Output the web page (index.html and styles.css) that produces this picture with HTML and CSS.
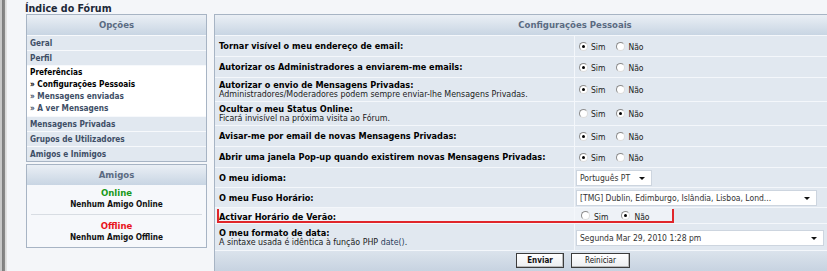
FILE: index.html
```html
<!DOCTYPE html>
<html lang="pt">
<head>
<meta charset="utf-8">
<title>Índice do Fórum</title>
<link rel="stylesheet" href="styles.css">
</head>
<body>
<div class="page">
  <div class="edge"></div>
  <div class="content">
    <h1 class="title">Índice do Fórum</h1>
    <div class="columns">
      <aside class="sidebar">
        <div class="box">
          <div class="box-head">Opções</div>
          <div class="menu-row">Geral</div>
          <div class="menu-row">Perfil</div>
          <div class="menu-block">
            <div class="menu-cur">Preferências</div>
            <div class="menu-sub active">» Configurações Pessoais</div>
            <div class="menu-sub">» Mensagens enviadas</div>
            <div class="menu-sub">» A ver Mensagens</div>
          </div>
          <div class="menu-row">Mensagens Privadas</div>
          <div class="menu-row">Grupos de Utilizadores</div>
          <div class="menu-row">Amigos e Inimigos</div>
        </div>
        <div class="box friends">
          <div class="box-head">Amigos</div>
          <div class="friends-body">
            <div class="friend-group">
              <div class="online">Online</div>
              <div class="friend-none">Nenhum Amigo Online</div>
            </div>
            <div class="friend-sep"></div>
            <div class="friend-group">
              <div class="offline">Offline</div>
              <div class="friend-none">Nenhum Amigo Offline</div>
            </div>
          </div>
        </div>
      </aside>

      <main class="panel">
        <div class="box-head panel-head">Configurações Pessoais</div>

        <div class="row r-radio">
          <div class="label"><b>Tornar visível o meu endereço de email:</b></div>
          <div class="value"><span class="radio on"></span><span class="rl">Sim</span><span class="radio"></span><span class="rl">Não</span></div>
        </div>
        <div class="row r-radio">
          <div class="label"><b>Autorizar os Administradores a enviarem-me emails:</b></div>
          <div class="value"><span class="radio on"></span><span class="rl">Sim</span><span class="radio"></span><span class="rl">Não</span></div>
        </div>
        <div class="row r-two">
          <div class="label"><b>Autorizar o envio de Mensagens Privadas:</b><span class="desc">Administradores/Moderadores podem sempre enviar-lhe Mensagens Privadas.</span></div>
          <div class="value"><span class="radio on"></span><span class="rl">Sim</span><span class="radio"></span><span class="rl">Não</span></div>
        </div>
        <div class="row r-two">
          <div class="label"><b>Ocultar o meu Status Online:</b><span class="desc">Ficará invisível na próxima visita ao Fórum.</span></div>
          <div class="value"><span class="radio"></span><span class="rl">Sim</span><span class="radio on"></span><span class="rl">Não</span></div>
        </div>
        <div class="row r-radio">
          <div class="label"><b>Avisar-me por email de novas Mensagens Privadas:</b></div>
          <div class="value"><span class="radio on"></span><span class="rl">Sim</span><span class="radio"></span><span class="rl">Não</span></div>
        </div>
        <div class="row r-radio">
          <div class="label"><b>Abrir uma janela Pop-up quando existirem novas Mensagens Privadas:</b></div>
          <div class="value"><span class="radio on"></span><span class="rl">Sim</span><span class="radio"></span><span class="rl">Não</span></div>
        </div>
        <div class="row r-select">
          <div class="label"><b>O meu idioma:</b></div>
          <div class="value"><span class="select sel-lang">Português PT<span class="arrow"></span></span></div>
        </div>
        <div class="row r-select">
          <div class="label"><b>O meu Fuso Horário:</b></div>
          <div class="value"><span class="select sel-tz">[TMG] Dublin, Edimburgo, Islândia, Lisboa, Lond...<span class="arrow"></span></span></div>
        </div>
        <div class="row r-dst">
          <div class="label"><b>Activar Horário de Verão:</b></div>
          <div class="value dst"><span class="radio"></span><span class="rl">Sim</span><span class="radio on"></span><span class="rl">Não</span></div>
          <div class="mark"></div>
        </div>
        <div class="row r-date">
          <div class="label"><b>O meu formato de data:</b><span class="desc">A sintaxe usada é idêntica à função PHP <span class="fn">date()</span>.</span></div>
          <div class="value"><span class="select sel-date">Segunda Mar 29, 2010 1:28 pm<span class="arrow"></span></span></div>
        </div>
        <div class="foot">
          <span class="btn btn-main">Enviar</span>
          <span class="btn">Reiniciar</span>
        </div>
      </main>
    </div>
  </div>
</div>
</body>
</html>
```
FILE: styles.css
```css
* { box-sizing: border-box; }
html, body { margin: 0; padding: 0; }
body {
  width: 827px;
  height: 271px;
  overflow: hidden;
  background: #f4f6f9;
  font-family: Tahoma, "DejaVu Sans Condensed", "DejaVu Sans", sans-serif;
  color: #000;
}
.page { display: flex; width: 827px; height: 271px; overflow: hidden; }
.edge {
  width: 7px;
  flex: none;
  background: linear-gradient(90deg, #c8c8c8 0, #c8c8c8 2px, #7d7d7d 2px, #8a8a8a 5px, #d6d6d6 5px, #e6e6e6 7px);
}
.content { padding-left: 18px; flex: none; }
.title {
  margin: 0;
  height: 14px;
  padding-top: 2px;
  font-size: 10.6px;
  line-height: 12px;
  font-weight: bold;
  color: #1c2838;
}
.columns { display: flex; gap: 7px; align-items: flex-start; }

/* sidebar */
.sidebar { width: 182px; flex: none; display: flex; flex-direction: column; gap: 2px; padding-left: 1px; }
.box { border: 1px solid #a7b4c4; background: #fff; }
.box-head {
  height: 20px;
  background: linear-gradient(#eaeff5, #c8d5e3);
  text-align: center;
  font-size: 9.5px;
  line-height: 20px;
  font-weight: bold;
  color: #5b6b82;
}
.menu-row {
  height: 15px;
  border-top: 1px solid #f7f9fc;
  background: #e1e8f0;
  padding-left: 3px;
  font-size: 8.2px;
  line-height: 14px;
  font-weight: bold;
  color: #3e4e66;
}
.menu-block {
  border-top: 1px solid #f7f9fc;
  background: #fff;
  height: 51px;
  padding: 1px 0 0 3px;
  font-size: 8.2px;
  font-weight: bold;
  line-height: 12px;
}
.menu-cur { color: #000; line-height: 11px; }
.menu-sub { color: #3e4e66; }
.menu-sub.active { color: #000; }
.friends-body { background: #f6f8fb; padding: 2px 4px 4px; }
.friend-group { text-align: center; font-weight: bold; }
.online { color: #1a9a1a; font-size: 9.5px; line-height: 12px; }
.offline { color: #e8131b; font-size: 9.5px; line-height: 12px; }
.friend-none { font-size: 8.2px; line-height: 11px; color: #111; }
.friend-sep { height: 1px; background: #d8dde3; margin: 4px 0 5px; }

/* main panel */
.panel {
  width: 722px;
  flex: none;
  border: 1px solid #a7b4c4;
  background: #dfe7f0;
}
.row { display: flex; border-top: 1px solid #f4f7fb; position: relative; }
.label {
  width: 360px;
  flex: none;
  background: #e1e8f0;
  border-right: 1px solid #f4f7fb;
  padding-left: 4px;
  display: flex;
  flex-direction: column;
  justify-content: center;
  font-size: 9.1px;
  line-height: 10px;
}
.label b { font-weight: bold; }
.desc { font-size: 8.8px; line-height: 9px; color: #1a1a1a; }
.fn { color: #2a3d5c; }
.value {
  flex: 1;
  background: #e1e8f0;
  display: flex;
  align-items: center;
  padding-left: 4px;
  font-size: 8.5px;
  color: #222;
}
.r-radio { height: 21px; }
.r-two { height: 24px; }
.r-select { height: 20px; }
.r-dst { height: 16px; }
.r-date { height: 27px; }
.r-dst .label { background: #eef2f7; padding-top: 2px; }
.r-dst .value.dst { padding-left: 6px; background: linear-gradient(90deg, #eef2f7 0, #eef2f7 98px, #e1e8f0 98px); }

.radio {
  width: 9px;
  height: 9px;
  border-radius: 50%;
  border: 1px solid #8c8c8c;
  border-right-color: #dcdcdc;
  border-bottom-color: #dcdcdc;
  background: #fff;
  display: inline-flex;
  align-items: center;
  justify-content: center;
  flex: none;
}
.radio.on::after {
  content: "";
  width: 3px;
  height: 3px;
  border-radius: 50%;
  background: #000;
}
.rl { margin: 1px 11px 0 3px; }
.dst .rl { margin: 3px 13px 0 4px; }

.select {
  position: relative;
  height: 16px;
  margin-left: -3px;
  background: #fff;
  border: 1px solid #cdd5df;
  padding: 0 18px 0 3px;
  line-height: 14px;
  font-size: 8.5px;
  color: #333;
  white-space: nowrap;
}
.sel-lang { width: 76px; }
.sel-tz { width: 241px; }
.sel-date { width: 248px; margin-top: 2px; }
.arrow {
  position: absolute;
  right: 6px;
  top: 6px;
  width: 0;
  height: 0;
  border-left: 3px solid transparent;
  border-right: 3px solid transparent;
  border-top: 3px solid #111;
}

.mark {
  position: absolute;
  left: 2px;
  top: 1px;
  width: 457px;
  height: 14px;
  border-left: 2px solid #e0262b;
  border-right: 2px solid #e0262b;
  border-bottom: 2px solid #e0262b;
  pointer-events: none;
}

.foot {
  height: 22px;
  border-top: 1px solid #f4f7fb;
  background: linear-gradient(#dbe3ec, #c6d2e0);
  display: flex;
  justify-content: flex-start;
  align-items: flex-start;
  gap: 7px;
  padding: 2px 0 0 301px;
}
.btn {
  height: 15px;
  width: 59px;
  border: 1px solid #3c3c3c;
  background: linear-gradient(#ffffff, #eceef1);
  box-shadow: inset -1px -1px 0 #b9b9b9;
  font-size: 8px;
  line-height: 13px;
  text-align: center;
  color: #111;
}
.btn-main { width: 48px; font-weight: bold; }
```
